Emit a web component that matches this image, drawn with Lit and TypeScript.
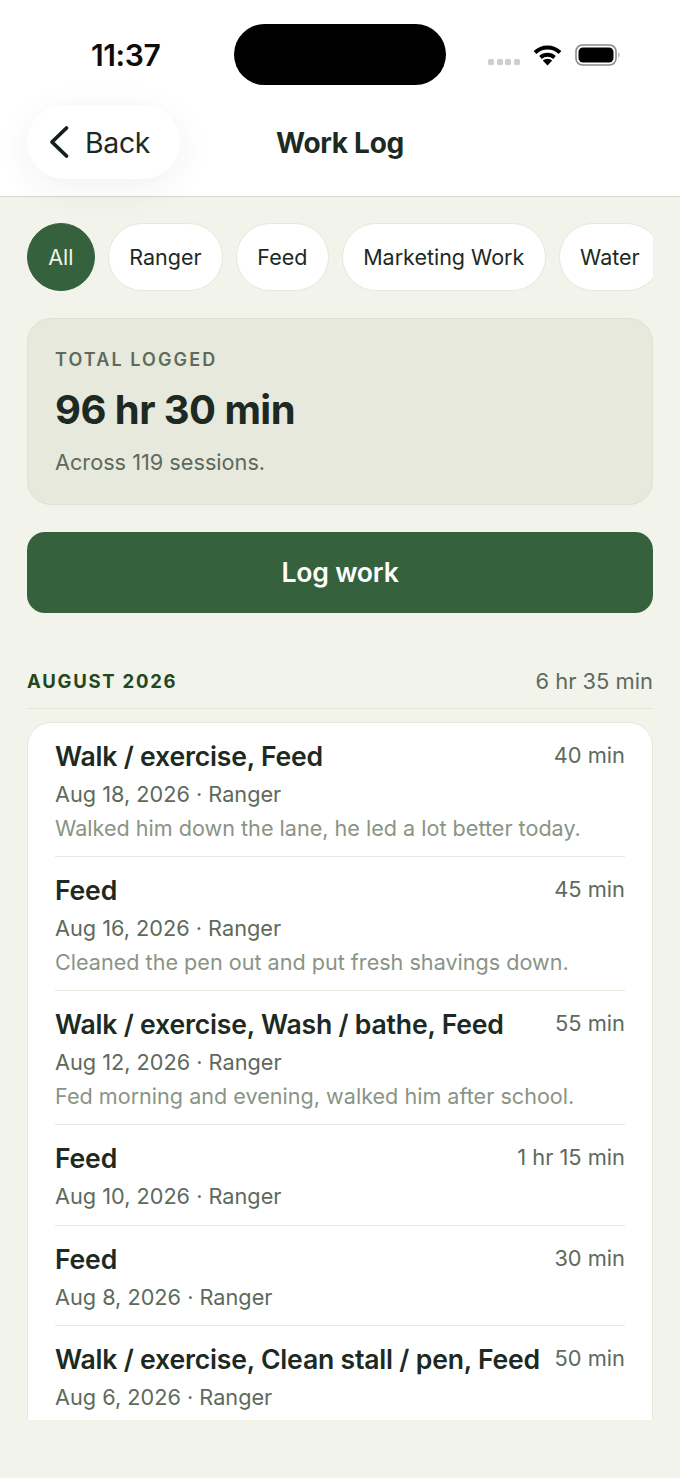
import { LitElement, html, css } from "lit";
import { customElement } from "lit/decorators.js";

type Entry = { title: string; time: string; meta: string; note?: string };
const entries: Entry[] = [
  { title: "Walk / exercise, Feed", time: "40 min", meta: "Aug 18, 2026 · Ranger", note: "Walked him down the lane, he led a lot better today." },
  { title: "Feed", time: "45 min", meta: "Aug 16, 2026 · Ranger", note: "Cleaned the pen out and put fresh shavings down." },
  { title: "Walk / exercise, Wash / bathe, Feed", time: "55 min", meta: "Aug 12, 2026 · Ranger", note: "Fed morning and evening, walked him after school." },
  { title: "Feed", time: "1 hr 15 min", meta: "Aug 10, 2026 · Ranger" },
  { title: "Feed", time: "30 min", meta: "Aug 8, 2026 · Ranger" },
  { title: "Walk / exercise, Clean stall / pen, Feed", time: "50 min", meta: "Aug 6, 2026 · Ranger" },
];
const chips = ["All", "Ranger", "Feed", "Marketing Work", "Water"];

@customElement("app-root")
export class AppRoot extends LitElement {
  static styles = css`
    :host { display: block; width: 680px; height: 1478px; overflow: hidden; background: #f2f3ea; font-family: Inter, "Liberation Sans", sans-serif; color: #1c2a23; }
    .top { background: #fff; height: 196px; border-bottom: 1px solid #d6d8cf; box-sizing: content-box; position: relative; }
    .status { height: 105px; display: grid; grid-template-columns: 234px 212px 234px; }
    .clock { font-size: 30px; font-weight: 600; color: #0c0c0c; padding: 38px 0 0 91px; line-height: 34px; letter-spacing: -0.4px; }
    .island { margin-top: 24px; height: 61px; background: #000; border-radius: 31px; }
    .sys { display: flex; align-items: flex-start; padding: 44px 0 0 42px; }
    .dots { display: flex; gap: 2.6px; margin: 15px 13px 0 0; }
    .dots i { width: 6px; height: 6px; border-radius: 1.5px; background: #cfcfcf; display: block; }
    .wifi { margin-right: 13px; }
    .nav { display: grid; grid-template-columns: 1fr auto 1fr; align-items: center; padding: 0 27px; height: 74px; }
    .back { justify-self: start; width: 153px; height: 74px; box-sizing: border-box; background: #fff; border-radius: 37px; box-shadow: 0 8px 36px rgba(40, 50, 40, 0.065); display: flex; align-items: center; gap: 15px; padding-left: 21px; font-size: 28.4px; color: #1c2a23; letter-spacing: -0.3px; }
    .title { font-size: 28px; font-weight: 700; letter-spacing: -0.3px; padding-top: 1px; }
    .chips { display: flex; gap: 13.4px; margin: 26px 27px 0; overflow: hidden; }
    .chip { flex: none; height: 68px; box-sizing: border-box; border-radius: 34px; padding: 0 20.2px; background: #fff; border: 1px solid #e6e8dc; display: flex; align-items: center; font-size: 21.5px; color: #1c2a23; }
    .chip.on { background: #35623c; border-color: #35623c; color: #f1f2e9; }
    .total { margin: 27px 27px 0; height: 187px; box-sizing: border-box; border-radius: 24px; background: #e7e9dc; border: 1px solid #dfe1d4; padding: 29px 27px 0; }
    .lbl { font-size: 18px; font-weight: 600; letter-spacing: 2.1px; color: #5d6a5c; line-height: 24px; }
    .big { font-size: 40px; font-weight: 700; letter-spacing: -0.55px; line-height: 48px; margin-top: 14px; color: #1c2a23; }
    .sub { font-size: 21.7px; color: #5d6a5c; line-height: 28px; margin-top: 14px; }
    .btn { margin: 27px 27px 0; height: 81px; border-radius: 18px; background: #35623c; color: #fff; font-size: 26.6px; font-weight: 600; display: flex; align-items: center; justify-content: center; letter-spacing: -0.2px; padding-bottom: 1px; box-sizing: border-box; }
    .sec { margin: 52px 27px 0; height: 43px; border-bottom: 1px solid #e2e4d9; display: flex; justify-content: space-between; align-items: flex-start; line-height: 32px; }
    .sec b { font-size: 18.5px; font-weight: 700; letter-spacing: 1.75px; color: #23471f; }
    .sec span { font-size: 21.9px; color: #5d6a5c; }
    .clip { margin: 13px 27px 0; height: 698px; overflow: hidden; }
    .card { background: #fff; border: 1px solid #e6e8dc; border-radius: 24px; padding: 0 27px 40px; }
    .row { padding: 13px 0 0; border-bottom: 1px solid #e6e8dc; box-sizing: border-box; height: 134px; }
    .row.short { height: 100.5px; }
    .row:last-child { border-bottom: 0; }
    .head { display: flex; justify-content: space-between; gap: 14px; align-items: flex-start; line-height: 40px; }
    .name { font-size: 26.6px; font-weight: 600; letter-spacing: -0.2px; color: #1c2a23; white-space: nowrap; }
    .time { font-size: 21.8px; color: #5d6a5c; white-space: nowrap; line-height: 38px; }
    .meta { font-size: 21.7px; color: #5d6a5c; line-height: 36px; }
    .note { font-size: 21.6px; color: #8a9485; line-height: 32px; white-space: nowrap; }
  `;

  render() {
    return html`
      <div class="top">
        <div class="status">
          <div class="clock">11:37</div>
          <div class="island"></div>
          <div class="sys">
            <div class="dots"><i></i><i></i><i></i><i></i></div>
            <svg class="wifi" width="29" height="22" viewBox="0 0 29 22">
              <path d="M2 8.5 A18 18 0 0 1 27 8.5" fill="none" stroke="#000" stroke-width="4"/>
              <path d="M7.5 13.5 A10.5 10.5 0 0 1 21.5 13.5" fill="none" stroke="#000" stroke-width="4"/>
              <path d="M14.5 21.5 L9.8 16.6 A6.8 6.8 0 0 1 19.2 16.6 Z" fill="#000"/>
            </svg>
            <svg width="46" height="22" viewBox="0 0 46 22">
              <rect x="1" y="1" width="40" height="20" rx="6.5" fill="none" stroke="#8a8a8a" stroke-width="1.6"/>
              <rect x="3.5" y="3.5" width="35" height="15" rx="4.5" fill="#000"/>
              <path d="M43.5 8 Q45.5 11 43.5 14 Z" fill="#8a8a8a"/>
            </svg>
          </div>
        </div>
        <div class="nav">
          <div class="back">
            <svg width="22" height="34" viewBox="0 0 22 34"><path d="M18.5 3 L4 17 L18.5 31" fill="none" stroke="#12201a" stroke-width="3.8" stroke-linecap="round" stroke-linejoin="round"/></svg>
            <span>Back</span>
          </div>
          <div class="title">Work Log</div>
          <div></div>
        </div>
      </div>
      <div class="chips">
        ${chips.map((c, i) => html`<div class="chip ${i === 0 ? "on" : ""}">${c}</div>`)}
      </div>
      <div class="total">
        <div class="lbl">TOTAL LOGGED</div>
        <div class="big">96 hr 30 min</div>
        <div class="sub">Across 119 sessions.</div>
      </div>
      <div class="btn">Log work</div>
      <div class="sec"><b>AUGUST 2026</b><span>6 hr 35 min</span></div>
      <div class="clip">
        <div class="card">
          ${entries.map((e) => html`
            <div class="row ${e.note ? "" : "short"}">
              <div class="head"><span class="name">${e.title}</span><span class="time">${e.time}</span></div>
              <div class="meta">${e.meta}</div>
              ${e.note ? html`<div class="note">${e.note}</div>` : ""}
            </div>`)}
        </div>
      </div>
    `;
  }
}
